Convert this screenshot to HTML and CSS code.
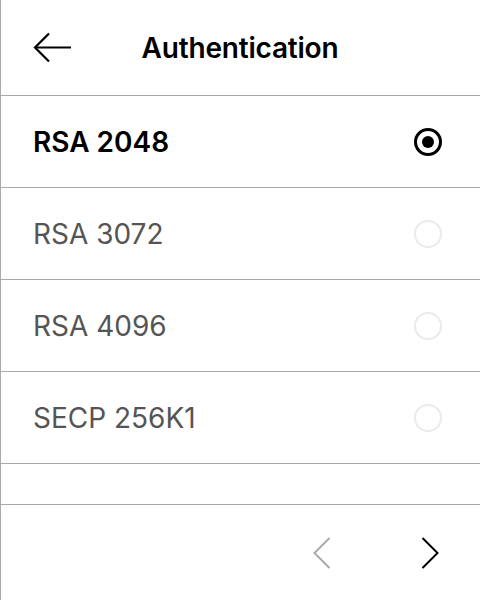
FILE: index.html
```html
<!DOCTYPE html>
<html>
<head>
<meta charset="utf-8">
<link rel="stylesheet" href="styles.css">
</head>
<body>
<div class="screen">
  <header class="header">
    <div class="back">
      <svg width="40" height="32" viewBox="0 0 40 32" fill="none" stroke="#000" stroke-width="2.2" stroke-linecap="butt" stroke-linejoin="miter">
        <line x1="2" y1="15.5" x2="38" y2="15.5"/>
        <polyline points="16,1.5 2,15.5 16,29.5"/>
      </svg>
    </div>
    <h1 class="title">Authentication</h1>
    <div></div>
  </header>
  <ul class="list">
    <li class="row selected"><span class="label">RSA 2048</span><span class="radio on"></span></li>
    <li class="row"><span class="label">RSA 3072</span><span class="radio"></span></li>
    <li class="row"><span class="label">RSA 4096</span><span class="radio"></span></li>
    <li class="row"><span class="label">SECP 256K1</span><span class="radio"></span></li>
    <li class="row empty"></li>
  </ul>
  <footer class="footer">
    <span class="nav prev">
      <svg width="18" height="32" viewBox="0 0 18 32" fill="none" stroke="#aaa" stroke-width="2"><polyline points="16.5,1 1.5,16 16.5,31"/></svg>
    </span>
    <span class="nav next">
      <svg width="18" height="32" viewBox="0 0 18 32" fill="none" stroke="#000" stroke-width="2"><polyline points="1.5,1 16.5,16 1.5,31"/></svg>
    </span>
  </footer>
</div>
</body>
</html>
```
FILE: styles.css
```css
html, body {
  margin: 0;
  padding: 0;
  background: #fff;
}
.screen {
  width: 479px;
  height: 600px;
  border-left: 1px solid #aaa;
  font-family: Inter, "Noto Sans", sans-serif;
  color: #000;
  display: flex;
  flex-direction: column;
}
.header {
  display: grid;
  grid-template-columns: 1fr auto 1fr;
  align-items: center;
  border-bottom: 1px solid #aaa;
  box-sizing: border-box;
  height: 96px;
}
.back {
  padding-left: 32px;
  display: flex;
  align-items: center;
  padding-top: 1px;
}
.back svg { display: block; }
.title {
  margin: 0;
  font-size: 28px;
  font-weight: 600;
  letter-spacing: -0.2px;
  margin-left: -1px;
  line-height: 1;
}
.list {
  list-style: none;
  margin: 0;
  padding: 0;
}
.row {
  height: 91px;
  border-bottom: 1px solid #aaa;
  display: flex;
  align-items: center;
  justify-content: space-between;
  padding: 0 38px 0 32px;
}
.row.empty { height: 40px; }
.label {
  font-size: 28px;
  color: #555;
  font-weight: 400;
  line-height: 1;
}
.selected .label {
  color: #000;
  font-weight: 600;
}
.radio {
  width: 24px;
  height: 24px;
  border: 2px solid #ebebeb;
  border-radius: 50%;
  box-sizing: content-box;
  position: relative;
}
.radio.on {
  border: 3px solid #000;
  width: 22px;
  height: 22px;
}
.radio.on::after {
  content: "";
  position: absolute;
  left: 5px;
  top: 5px;
  width: 12px;
  height: 12px;
  border-radius: 50%;
  background: #000;
}
.footer {
  flex: 1;
  display: flex;
  align-items: center;
  justify-content: flex-end;
  padding-right: 41px;
  gap: 90px;
}
.nav svg { display: block; }
```
